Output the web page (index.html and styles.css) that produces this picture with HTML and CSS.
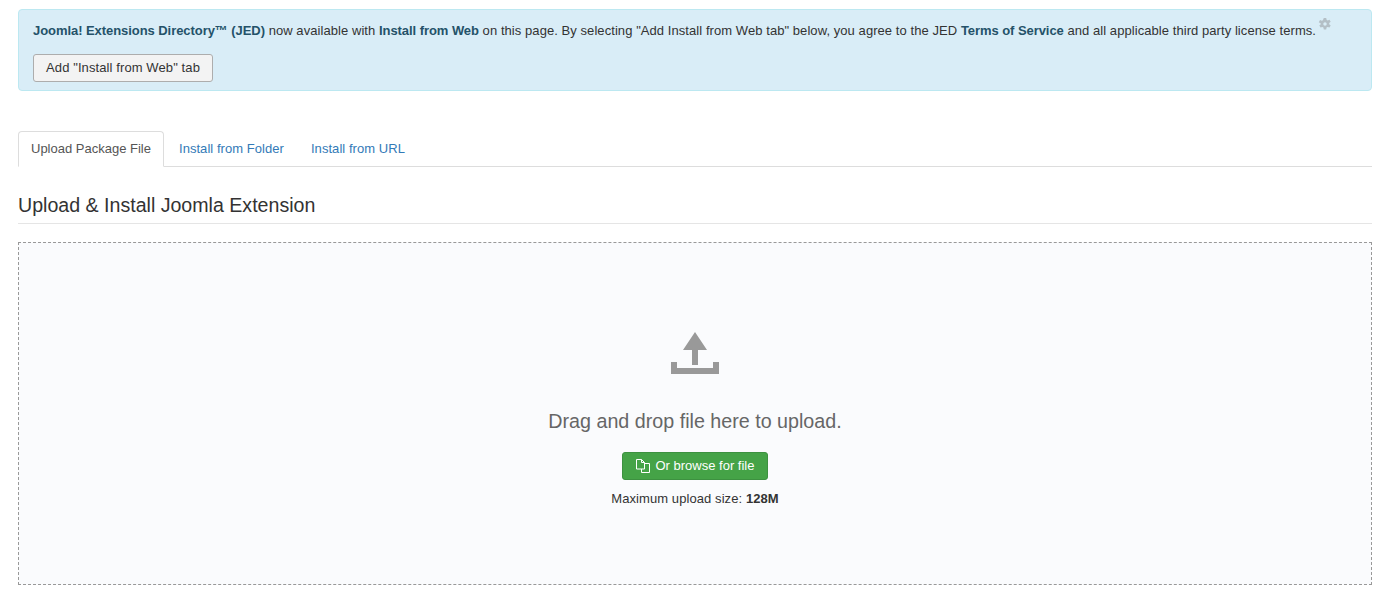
FILE: index.html
```html
<!DOCTYPE html>
<html lang="en">
<head>
  <meta charset="UTF-8" />
  <title>Extensions: Install</title>
  <link rel="stylesheet" href="styles.css">
</head>
<body>

<div class="alert">
  <div class="alert-line">
    <p class="alert-text"><a href="#">Joomla! Extensions Directory™ (JED)</a> now available with <a href="#">Install from Web</a> on this page. By selecting "Add Install from Web tab" below, you agree to the JED <a href="#">Terms of Service</a> and all applicable third party license terms.</p>
    <svg class="gear" viewBox="0 0 16 16" width="14" height="14">
      <path fill-rule="evenodd" d="M6.600 0h2.800l.4 2.200 1.200.7 2.100-.8 1.400 2.400-1.700 1.400v1.400l1.700 1.400-1.400 2.400-2.100-.8-1.200.7-.4 2.200H6.600l-.4-2.200-1.200-.7-2.100.8-1.400-2.400 1.700-1.400V6.300L.9 4.900l1.400-2.400 2.100.8 1.200-.7zM8 5a2 2 0 1 0 0 4 2 2 0 0 0 0-4z" transform="translate(0 1)"/>
    </svg>
  </div>
  <button class="btn" type="button">Add "Install from Web" tab</button>
</div>

<ul class="tabs">
  <li class="tab active"><a href="#">Upload Package File</a></li>
  <li class="tab"><a href="#">Install from Folder</a></li>
  <li class="tab"><a href="#">Install from URL</a></li>
</ul>

<h2 class="legend">Upload &amp; Install Joomla Extension</h2>

<div class="dropzone">
  <svg class="upload-icon" viewBox="0 0 48 42" width="48" height="42">
    <path d="M24 0l12 18H27v15h-6V18h-9z"/>
    <path d="M0 30h6v6h36v-6h6v12H0z"/>
  </svg>
  <p class="drop-text">Drag and drop file here to upload.</p>
  <button class="btn-browse" type="button">
    <svg viewBox="0 0 14 14" width="14" height="14">
      <path d="M.5.5h5l3 3v6.500h-8z M5.500.5v3h3" fill="none" stroke="currentColor"/>
      <path d="M8.500 4.500h5v9h-8v-3.500" fill="none" stroke="currentColor"/>
    </svg>
    Or browse for file
  </button>
  <p class="max-size">Maximum upload size: <strong>128M</strong></p>
</div>

</body>
</html>
```

FILE: styles.css
```css
* { box-sizing: border-box; }
body {
  margin: 0;
  padding: 9px 17px 18px 18px;
  font-family: 'Liberation Sans', Arial, sans-serif;
  font-size: 13px;
  line-height: 18px;
  color: #333;
  background: #fff;
}
a { text-decoration: none; color: inherit; }

.alert {
  height: 82px;
  padding: 12px 14px;
  background: #d9edf7;
  border: 1px solid #bce8f1;
  border-radius: 4px;
}
.alert-line {
  display: flex;
  align-items: flex-start;
  gap: 2px;
}
.alert-text {
  margin: 0;
  white-space: nowrap;
  letter-spacing: .065px;
}
.alert-text a {
  font-weight: bold;
  color: #245269;
  letter-spacing: -.06px;
}
.gear {
  margin-top: -5px;
  fill: #b4bfc6;
}
.btn {
  display: block;
  width: 180px;
  height: 28px;
  margin-top: 14px;
  padding: 0;
  font: inherit;
  letter-spacing: .1px;
  color: #333;
  background: #f3f3f3;
  border: 1px solid #adadad;
  border-radius: 3px;
}

.tabs {
  display: flex;
  height: 36px;
  margin: 40px 0 0;
  padding: 0;
  list-style: none;
  border-bottom: 1px solid #ddd;
}
.tab {
  height: 36px;
  padding: 8px 12px 0;
  margin-right: 1px;
  letter-spacing: .05px;
  color: #337ab7;
  border: 1px solid transparent;
}
.tab.active {
  margin-right: 2px;
  letter-spacing: 0;
  color: #555;
  background: #fff;
  border-color: #ddd;
  border-bottom-color: #fff;
  border-radius: 4px 4px 0 0;
}

.legend {
  height: 39px;
  margin: 18px 0;
  padding-top: 8px;
  font-size: 19.6px;
  font-weight: normal;
  line-height: 24px;
  color: #333;
  border-bottom: 1px solid #e5e5e5;
}

.dropzone {
  display: flex;
  flex-direction: column;
  align-items: center;
  height: 343px;
  padding-top: 89px;
  background: #fafbfd;
  border: 1px dashed #999;
}
.upload-icon { fill: #999; }
.drop-text {
  margin: 35px 0 0;
  font-size: 19.7px;
  line-height: 24px;
  color: #666;
}
.btn-browse {
  display: flex;
  align-items: center;
  justify-content: center;
  gap: 6px;
  width: 146px;
  height: 28px;
  margin-top: 19px;
  padding: 0;
  font: inherit;
  color: #fff;
  background: #45a347;
  border: 1px solid #3d9140;
  border-radius: 3px;
}
.max-size {
  margin: 10px 0 0;
  letter-spacing: .08px;
  color: #333;
}
```
